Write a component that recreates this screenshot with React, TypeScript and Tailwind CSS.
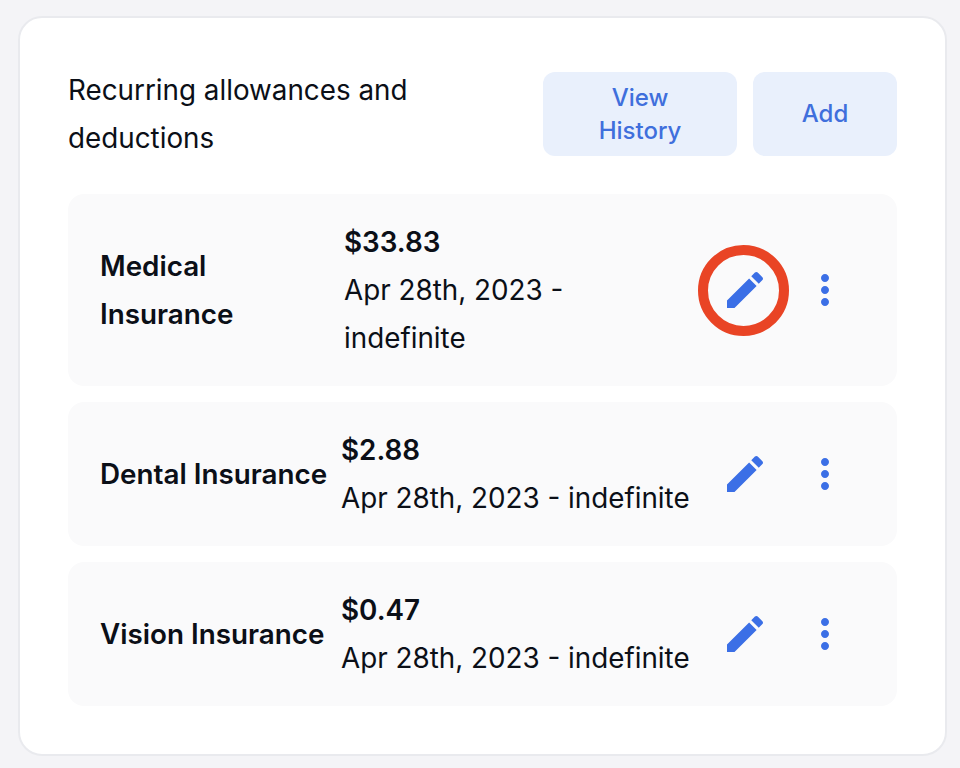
const font = { fontFamily: '"Inter", "Liberation Sans", sans-serif' };

function EditIcon() {
  return (
    <svg viewBox="0 0 24 24" className="w-12 h-12 fill-[#3b6fe6]">
      <path d="M3 17.25V21h3.75L17.81 9.94l-3.75-3.75L3 17.25zM20.71 7.04c.39-.39.39-1.02 0-1.41l-2.34-2.34c-.39-.39-1.02-.39-1.41 0l-1.83 1.83 3.75 3.75 1.83-1.83z" />
    </svg>
  );
}

function MoreIcon() {
  return (
    <svg viewBox="0 0 24 24" className="w-12 h-12 fill-[#3b6fe6]">
      <path d="M12 8c1.1 0 2-.9 2-2s-.9-2-2-2-2 .9-2 2 .9 2 2 2zm0 2c-1.1 0-2 .9-2 2s.9 2 2 2 2-.9 2-2-.9-2-2-2zm0 6c-1.1 0-2 .9-2 2s.9 2 2 2 2-.9 2-2-.9-2-2-2z" />
    </svg>
  );
}

function Row({ name, amount, range, nameClass, rangeClass, ring }: { name: string; amount: string; range: string; nameClass: string; rangeClass: string; ring?: boolean }) {
  return (
    <div className="flex items-center rounded-2xl bg-[#fafafb] py-6 pl-8 pr-12">
      <div className={`${nameClass} shrink-0 text-[27.8px] leading-[48px] font-semibold text-[#0b0f17]`}>{name}</div>
      <div className={`${rangeClass} text-[27.8px] leading-[48px] text-[#0b0f17]`}>
        <div className="font-semibold">{amount}</div>
        <div>{range}</div>
      </div>
      <div className="ml-auto flex items-center gap-8">
        <div className="relative h-12 w-12">
          <EditIcon />
          {ring && <div className="absolute left-[-23px] top-[-21px] h-[91px] w-[91px] rounded-full border-[10px] border-[#e94425]" />}
        </div>
        <MoreIcon />
      </div>
    </div>
  );
}

export default function App() {
  return (
    <div style={font} className="min-h-[768px] bg-[#f4f4f7] pt-[16px] pl-[18px] pr-[13px] pb-[12px]">
      <div className="rounded-3xl border-2 border-[#e9eaee] bg-white p-12">
        <div className="flex h-24 items-center">
          <div className="w-[420px] text-[27.8px] leading-[48px] text-[#0b0f17]">Recurring allowances and deductions</div>
          <div className="ml-auto flex gap-4">
            <div className="flex h-[84px] w-[194px] items-center justify-center rounded-xl bg-[#e9f0fc] px-8 text-center text-2xl leading-[33px] font-medium text-[#3f6fdc]">View<br />History</div>
            <div className="flex h-[84px] w-[144px] items-center justify-center rounded-xl bg-[#e9f0fc] text-center text-2xl font-medium text-[#3f6fdc]">Add</div>
          </div>
        </div>
        <div className="mt-8 flex flex-col gap-4">
          <Row name="Medical Insurance" amount="$33.83" range="Apr 28th, 2023 - indefinite" nameClass="w-[244px] pr-16" rangeClass="w-[300px]" ring />
          <Row name="Dental Insurance" amount="$2.88" range="Apr 28th, 2023 - indefinite" nameClass="w-[241px]" rangeClass="" />
          <Row name="Vision Insurance" amount="$0.47" range="Apr 28th, 2023 - indefinite" nameClass="w-[241px]" rangeClass="" />
        </div>
      </div>
    </div>
  );
}
